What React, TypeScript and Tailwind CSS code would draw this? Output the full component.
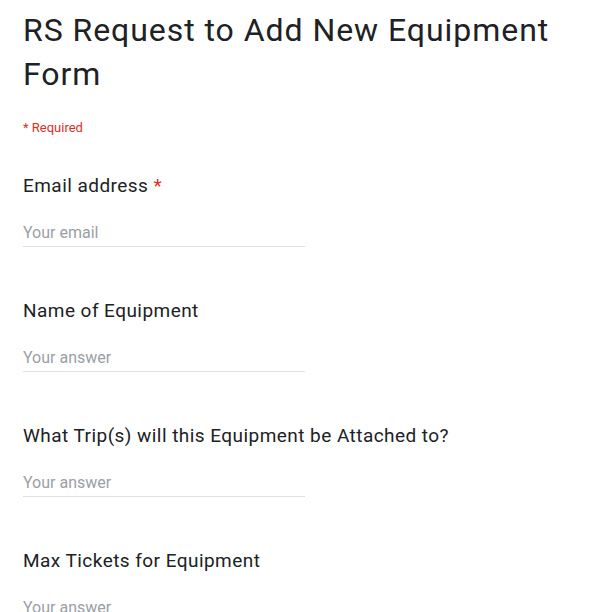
const questions = [
  { label: "Email address", placeholder: "Your email", required: true },
  { label: "Name of Equipment", placeholder: "Your answer", required: false },
  { label: "What Trip(s) will this Equipment be Attached to?", placeholder: "Your answer", required: false },
  { label: "Max Tickets for Equipment", placeholder: "Your answer", required: false },
];

const Question = (props: { label: string; placeholder: string; required: boolean }) => {
  const { label, placeholder, required } = props;
  return (
    <div className="mb-[52px]">
      <div className="text-[19px] leading-[24px] tracking-[0.45px] text-[#202124]">
        {label}
        {required && <span className="text-[#d93025]"> *</span>}
      </div>
      <div className="mt-[23px] w-[282px] border-b border-[#e0e0e0] pb-[1px]">
        <input
          type="text"
          placeholder={placeholder}
          className="block w-full h-[24px] text-[16px] leading-[24px] text-[#202124] placeholder:text-[#9aa0a6] outline-none bg-transparent"
        />
      </div>
    </div>
  );
};

const App = () => {
  return (
    <div className="min-h-screen bg-white px-[23px] pt-[8px] font-['Roboto','Liberation_Sans',sans-serif]">
      <div className="text-[32px] leading-[44px] tracking-[0.95px] text-[#202124]">RS Request to Add New Equipment Form</div>
      <div className="mt-[24px] text-[13px] leading-[16px] text-[#d93025]">* Required</div>
      <div className="mt-[38px]">
        {questions.map((q) => (
          <Question key={q.label} label={q.label} placeholder={q.placeholder} required={q.required} />
        ))}
      </div>
    </div>
  );
};

export default App;
